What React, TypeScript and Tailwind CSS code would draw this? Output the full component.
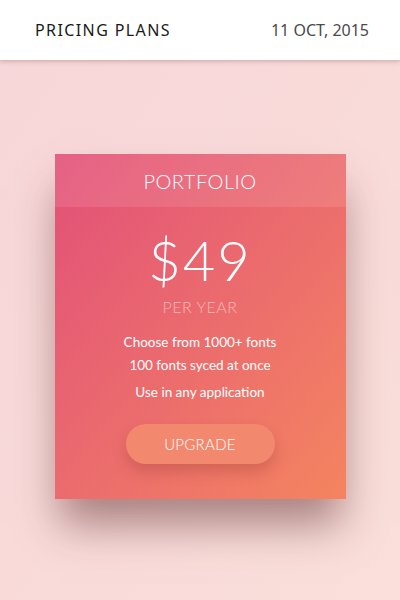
export default function App() {
  return (
    <div className="w-[400px] h-[600px] overflow-hidden bg-gradient-to-br from-[#f8d6d9] to-[#fadfda] font-['Lato',sans-serif]">
      {/* top bar */}
      <header className="relative z-10 h-[60px] bg-white flex items-center justify-between pl-[35px] pr-[31px] shadow-[0_2px_4px_rgba(120,60,60,0.25)]">
        <span className="text-[16px] tracking-[1.4px] text-[#1a1a1a] font-['Noto_Sans',sans-serif]">PRICING PLANS</span>
        <span className="text-[16px] text-[#4a4a4a] font-['Noto_Sans',sans-serif]">11 OCT, 2015</span>
      </header>

      <div className="flex justify-center pt-[94px]">
        <div className="w-[291px] h-[345px] bg-gradient-to-br from-[#e24f78] to-[#f4845f] shadow-[0_30px_40px_-5px_rgba(90,40,40,0.5)] flex flex-col text-white">
          <div className="h-[53px] bg-white/10 flex items-center justify-center text-[20px] font-light tracking-[0.5px]">
            PORTFOLIO
          </div>
          <div className="flex flex-col items-center">
            <div className="mt-[23px] text-[56px] font-light leading-[60px] tracking-[2px]">$49</div>
            <div className="mt-[5px] text-[16px] font-light text-[#f8b6b8] tracking-[0.5px]">PER YEAR</div>
            <div className="mt-[12px] flex flex-col items-center text-[13.5px] leading-[23px]">
              <span>Choose from 1000+ fonts</span>
              <span>100 fonts syced at once</span>
              <span className="mt-[4px]">Use in any application</span>
            </div>
            <button className="mt-[20px] w-[149px] h-[40px] rounded-full bg-[#f2896f] text-[15px] font-light tracking-[0.3px] shadow-[0_8px_14px_rgba(150,60,50,0.3)]">
              UPGRADE
            </button>
          </div>
        </div>
      </div>
    </div>
  );
}
